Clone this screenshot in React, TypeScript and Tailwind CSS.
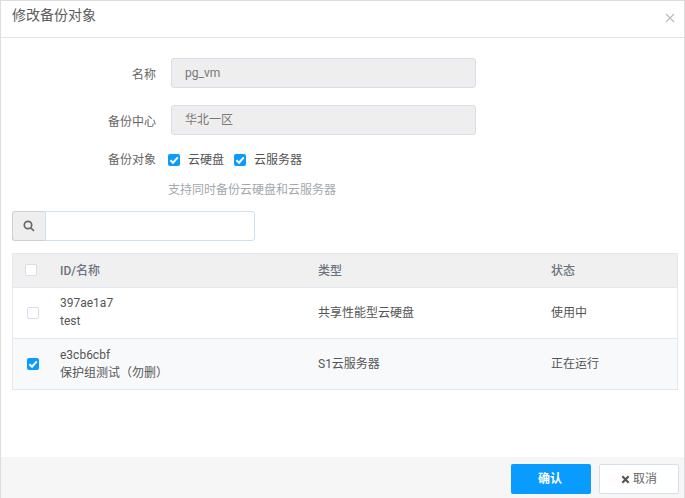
import React from "react";

function Box({ checked, className = "" }: { checked?: boolean; className?: string }) {
  if (checked) {
    return (
      <span className={"flex h-3 w-3 items-center justify-center rounded-[2px] bg-[#0a9bff] " + className}>
        <svg viewBox="0 0 12 12" className="h-3 w-3" fill="none" stroke="#fff" strokeWidth="2">
          <path d="M2.4 6.2 L5 8.7 L9.8 3.4" />
        </svg>
      </span>
    );
  }
  return <span className={"block h-3 w-3 rounded-[2px] border border-[#d5deea] bg-white " + className} />;
}

function Field({ label, value }: { label: string; value: string }) {
  return (
    <div className="flex items-center">
      <div className="w-[155px] pt-[3px] text-right text-[#666]">{label}</div>
      <div className="ml-[15px] flex h-[30px] w-[305px] items-center rounded-[3px] border border-[#d3dfea] bg-[#eeeeee] px-[13px] text-[#777]">
        {value}
      </div>
    </div>
  );
}

export default function App() {
  return (
    <div className="flex h-[498px] w-[685px] flex-col border-x border-t border-[#dddddd] bg-white text-[12px] text-[#555] [font-family:Roboto,'Noto_Sans_CJK_SC',sans-serif]">
      <div className="flex h-[37px] shrink-0 items-center justify-between border-b border-[#dfe3ea] pl-[11px] pr-[9px]">
        <span className="pb-[8px] text-[14px] text-[#5c5c5c]">修改备份对象</span>
        <svg viewBox="0 0 10 10" className="mb-[2px] h-[10px] w-[10px]" stroke="#b4bcc6" strokeWidth="1.2">
          <path d="M1 1 L9 9 M9 1 L1 9" />
        </svg>
      </div>

      <div className="flex flex-1 flex-col pl-[11px] pr-[6px]">
        <div className="-ml-[11px] mt-[20px] flex flex-col gap-[17px]">
          <Field label="名称" value="pg_vm" />
          <Field label="备份中心" value="华北一区" />
        </div>

        <div className="-ml-[11px] mt-[16px] flex h-[18px] items-center">
          <div className="w-[155px] text-right text-[#666]">备份对象</div>
          <Box checked className="ml-[12px]" />
          <span className="ml-[8px]">云硬盘</span>
          <Box checked className="ml-[10px]" />
          <span className="ml-[8px]">云服务器</span>
        </div>

        <div className="ml-[156px] mt-[12px] text-[#a3a8ad]">支持同时备份云硬盘和云服务器</div>

        <div className="mt-[12px] flex h-[30px] w-[243px]">
          <div className="flex w-[33px] items-center justify-center rounded-l-[3px] border border-r-0 border-[#d0d0d0] bg-[#eeeeee]">
            <svg viewBox="0 0 12 12" className="h-[12px] w-[12px]" fill="none" stroke="#666" strokeWidth="1.7">
              <circle cx="5" cy="5" r="3.7" />
              <path d="M7.8 7.8 L11 11" />
            </svg>
          </div>
          <div className="flex-1 rounded-r-[3px] border border-[#cfe0ee] bg-white" />
        </div>

        <div className="mt-[12px] w-[666px] border border-[#e3e8ef]">
          <div className="grid h-[33px] grid-cols-[47px_258px_233px_1fr] items-center bg-[#f0f0f0] font-medium text-[#6b7280]">
            <Box className="ml-[12px] -mt-[1px]" />
            <span>ID/名称</span>
            <span>类型</span>
            <span>状态</span>
          </div>
          <div className="grid h-[51px] grid-cols-[47px_258px_233px_1fr] items-center border-t border-[#e3e8ef] bg-white">
            <Box className="ml-[14px]" />
            <div className="pb-[3px] leading-[18px]">
              <div>397ae1a7</div>
              <div>test</div>
            </div>
            <span>共享性能型云硬盘</span>
            <span>使用中</span>
          </div>
          <div className="grid h-[51px] grid-cols-[47px_258px_233px_1fr] items-center border-t border-[#e3e8ef] bg-[#f8f9fb]">
            <Box checked className="ml-[14px]" />
            <div className="pb-[1px] leading-[18px]">
              <div>e3cb6cbf</div>
              <div>保护组测试（勿删）</div>
            </div>
            <span className="pb-[1px]">S1云服务器</span>
            <span className="pb-[1px]">正在运行</span>
          </div>
        </div>
      </div>

      <div className="flex h-[41px] shrink-0 items-center justify-end gap-[8px] bg-[#f6f6f6] pr-[5px] pt-[3px]">
        <div className="flex h-[30px] w-[80px] items-center justify-center rounded-[2px] bg-[#0a9bff] pr-[2px] font-bold text-white">确认</div>
        <div className="flex h-[30px] w-[80px] items-center justify-center gap-[3px] rounded-[2px] border border-[#d3dfea] bg-white text-[#666]">
          <svg viewBox="0 0 10 10" className="h-[9px] w-[9px]" stroke="#555" strokeWidth="2.4">
            <path d="M1.5 1.5 L8.5 8.5 M8.5 1.5 L1.5 8.5" />
          </svg>
          取消
        </div>
      </div>
    </div>
  );
}
